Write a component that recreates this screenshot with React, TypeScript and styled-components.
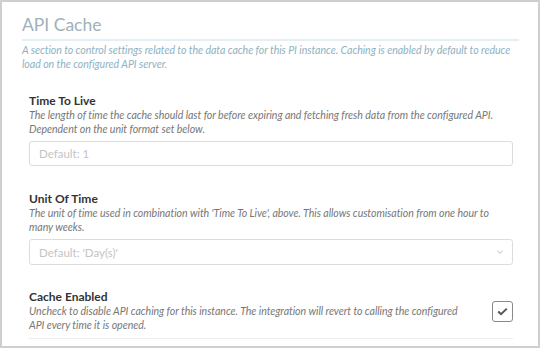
import React from 'react';
import styled, { createGlobalStyle } from 'styled-components';

const GlobalStyle = createGlobalStyle`
  html, body {
    margin: 0;
    padding: 0;
    background: #fff;
  }
  body {
    font-family: Lato, "Open Sans", sans-serif;
  }
  * { box-sizing: border-box; }
`;

const Panel = styled.div`
  width: 540px;
  height: 348px;
  border: 2px solid #cfcfcf;
  background: #fff;
  padding: 11px 19px 0 20px;
  overflow: hidden;
`;

const Title = styled.h2`
  margin: 0;
  font-size: 17.5px;
  font-weight: 400;
  color: #9fb1b9;
  line-height: 24px;
  padding-bottom: 2px;
  border-bottom: 2px solid #e4eff3;
`;

const Intro = styled.p`
  margin: 2px 0 0;
  font-size: 10.6px;
  font-style: italic;
  line-height: 14px;
  letter-spacing: -0.05px;
  color: #8fb2c0;
  white-space: nowrap;
`;

const Fields = styled.div`
  padding: 0 6px 0 7px;
  margin-top: 22px;
  display: flex;
  flex-direction: column;
`;

const Field = styled.div<{ $gap?: number }>`
  margin-bottom: ${(p) => p.$gap ?? 0}px;
`;

const Label = styled.div`
  font-size: 12px;
  font-weight: 700;
  color: #333;
  line-height: 15px;
`;

const Help = styled.div`
  font-size: 10.6px;
  font-style: italic;
  color: #777;
  line-height: 14px;
  letter-spacing: -0.05px;
  white-space: nowrap;
`;

const TextInput = styled.input`
  display: block;
  width: 100%;
  height: 25px;
  margin-top: 5px;
  border: 1px solid #dcdcdc;
  border-radius: 3px;
  padding: 0 9px;
  font-family: inherit;
  font-size: 11.5px;
  color: #555;
  outline: none;
  &::placeholder { color: #c4c4c4; }
`;

const SelectBox = styled.div`
  margin-top: 5px;
  height: 26px;
  border: 1px solid #dcdcdc;
  border-radius: 3px;
  padding: 0 9px;
  display: flex;
  align-items: center;
  justify-content: space-between;
  font-size: 11.5px;
  color: #c4c4c4;
`;

const Chevron = styled.svg`
  width: 8px;
  height: 8px;
  margin-right: -1px;
`;

const CheckRow = styled.div`
  display: flex;
  align-items: flex-start;
  justify-content: space-between;
  padding-bottom: 6px;
  border-bottom: 1px solid #ececec;
`;

const CheckText = styled.div`
  flex: 1;
`;

const CheckBox = styled.div`
  width: 21px;
  height: 21px;
  margin-top: 12px;
  border: 1px solid #8a8a8a;
  border-radius: 3px;
  display: flex;
  align-items: center;
  justify-content: center;
`;

export default function App() {
  return (
    <>
      <GlobalStyle />
      <Panel>
        <Title>API Cache</Title>
        <Intro>
          A section to control settings related to the data cache for this PI instance. Caching is enabled by default to reduce
          <br />
          load on the configured API server.
        </Intro>
        <Fields>
          <Field $gap={25}>
            <Label>Time To Live</Label>
            <Help>
              The length of time the cache should last for before expiring and fetching fresh data from the configured API.
              <br />
              Dependent on the unit format set below.
            </Help>
            <TextInput placeholder="Default: 1" />
          </Field>
          <Field $gap={24}>
            <Label>Unit Of Time</Label>
            <Help>
              The unit of time used in combination with 'Time To Live', above. This allows customisation from one hour to
              <br />
              many weeks.
            </Help>
            <SelectBox>
              <span>Default: 'Day(s)'</span>
              <Chevron viewBox="0 0 10 10">
                <path d="M1.5 3.5 L5 6.5 L8.5 3.5" fill="none" stroke="#bbb" strokeWidth="1.2" />
              </Chevron>
            </SelectBox>
          </Field>
          <CheckRow>
            <CheckText>
              <Label>Cache Enabled</Label>
              <Help>
                Uncheck to disable API caching for this instance. The integration will revert to calling the configured
                <br />
                API every time it is opened.
              </Help>
            </CheckText>
            <CheckBox>
              <svg width="11" height="9" viewBox="0 0 11 9">
                <path d="M1.2 4.6 L4 7.2 L9.8 1.6" fill="none" stroke="#555" strokeWidth="2" />
              </svg>
            </CheckBox>
          </CheckRow>
        </Fields>
      </Panel>
    </>
  );
}
